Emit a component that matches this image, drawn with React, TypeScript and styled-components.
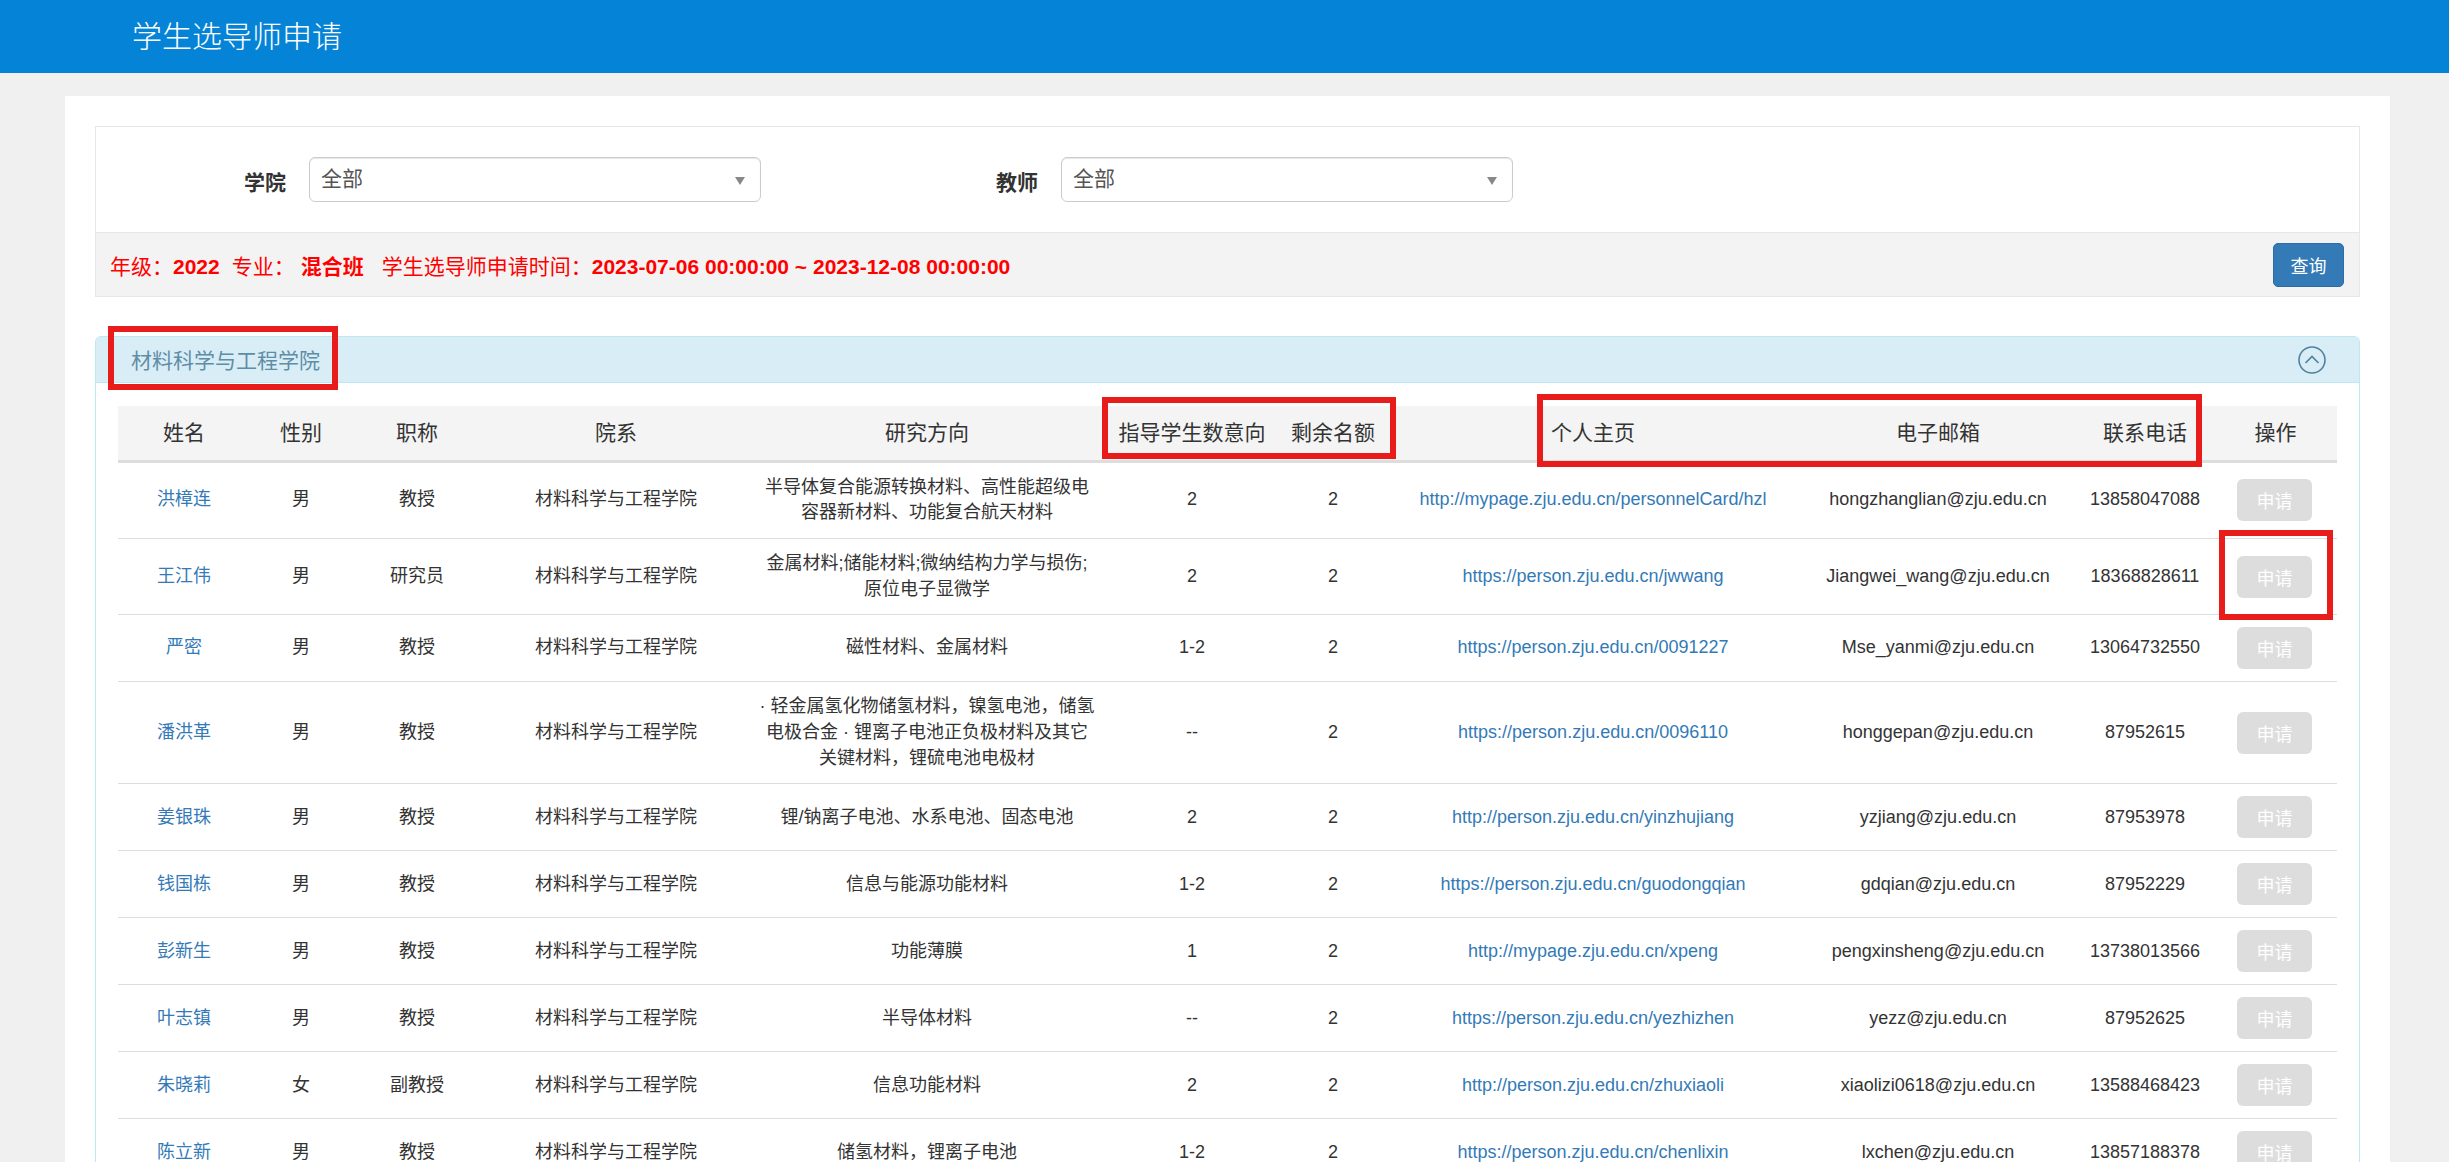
import * as React from "react";
import styled, { createGlobalStyle } from "styled-components";

interface ITeacher {
  name: string;
  gender: string;
  title: string;
  research: string;
  intent: string;
  left: string;
  homepage: string;
  email: string;
  phone: string;
}

const teachers: ITeacher[] = [
  {
    name: "洪樟连",
    gender: "男",
    title: "教授",
    research: "半导体复合能源转换材料、高性能超级电\n容器新材料、功能复合航天材料",
    intent: "2",
    left: "2",
    homepage: "http://mypage.zju.edu.cn/personnelCard/hzl",
    email: "hongzhanglian@zju.edu.cn",
    phone: "13858047088",
  },
  {
    name: "王江伟",
    gender: "男",
    title: "研究员",
    research: "金属材料;储能材料;微纳结构力学与损伤;\n原位电子显微学",
    intent: "2",
    left: "2",
    homepage: "https://person.zju.edu.cn/jwwang",
    email: "Jiangwei_wang@zju.edu.cn",
    phone: "18368828611",
  },
  {
    name: "严密",
    gender: "男",
    title: "教授",
    research: "磁性材料、金属材料",
    intent: "1-2",
    left: "2",
    homepage: "https://person.zju.edu.cn/0091227",
    email: "Mse_yanmi@zju.edu.cn",
    phone: "13064732550",
  },
  {
    name: "潘洪革",
    gender: "男",
    title: "教授",
    research:
      "· 轻金属氢化物储氢材料，镍氢电池，储氢\n电极合金 · 锂离子电池正负极材料及其它\n关键材料，锂硫电池电极材",
    intent: "--",
    left: "2",
    homepage: "https://person.zju.edu.cn/0096110",
    email: "honggepan@zju.edu.cn",
    phone: "87952615",
  },
  {
    name: "姜银珠",
    gender: "男",
    title: "教授",
    research: "锂/钠离子电池、水系电池、固态电池",
    intent: "2",
    left: "2",
    homepage: "http://person.zju.edu.cn/yinzhujiang",
    email: "yzjiang@zju.edu.cn",
    phone: "87953978",
  },
  {
    name: "钱国栋",
    gender: "男",
    title: "教授",
    research: "信息与能源功能材料",
    intent: "1-2",
    left: "2",
    homepage: "https://person.zju.edu.cn/guodongqian",
    email: "gdqian@zju.edu.cn",
    phone: "87952229",
  },
  {
    name: "彭新生",
    gender: "男",
    title: "教授",
    research: "功能薄膜",
    intent: "1",
    left: "2",
    homepage: "http://mypage.zju.edu.cn/xpeng",
    email: "pengxinsheng@zju.edu.cn",
    phone: "13738013566",
  },
  {
    name: "叶志镇",
    gender: "男",
    title: "教授",
    research: "半导体材料",
    intent: "--",
    left: "2",
    homepage: "https://person.zju.edu.cn/yezhizhen",
    email: "yezz@zju.edu.cn",
    phone: "87952625",
  },
  {
    name: "朱晓莉",
    gender: "女",
    title: "副教授",
    research: "信息功能材料",
    intent: "2",
    left: "2",
    homepage: "http://person.zju.edu.cn/zhuxiaoli",
    email: "xiaolizi0618@zju.edu.cn",
    phone: "13588468423",
  },
  {
    name: "陈立新",
    gender: "男",
    title: "教授",
    research: "储氢材料，锂离子电池",
    intent: "1-2",
    left: "2",
    homepage: "https://person.zju.edu.cn/chenlixin",
    email: "lxchen@zju.edu.cn",
    phone: "13857188378",
  },
];

const columns = [
  { label: "姓名", width: 132 },
  { label: "性别", width: 102 },
  { label: "职称", width: 130 },
  { label: "院系", width: 268 },
  { label: "研究方向", width: 354 },
  { label: "指导学生数意向", width: 176 },
  { label: "剩余名额", width: 106 },
  { label: "个人主页", width: 414 },
  { label: "电子邮箱", width: 276 },
  { label: "联系电话", width: 138 },
  { label: "操作", width: 123 },
];

const marks = [
  { x: 108, y: 326, w: 230, h: 64 },
  { x: 1102, y: 397, w: 294, h: 62 },
  { x: 1537, y: 394, w: 665, h: 73 },
  { x: 2219, y: 530, w: 114, h: 90 },
];

export default function App() {
  return (
    <Page>
      <GlobalStyle />
      <TopBar>
        <TopTitle>学生选导师申请</TopTitle>
      </TopBar>
      <Container>
        <FilterPanel>
          <FilterRow>
            <FilterGroup>
              <FilterLabel>学院</FilterLabel>
              <SelectBox>
                全部
                <SelectArrow />
              </SelectBox>
            </FilterGroup>
            <FilterGroup>
              <FilterLabel>教师</FilterLabel>
              <SelectBox>
                全部
                <SelectArrow />
              </SelectBox>
            </FilterGroup>
          </FilterRow>
          <InfoRow>
            <InfoText>
              年级：<b>2022</b>
              <InfoItem $gap={12}>专业：</InfoItem>
              <InfoItem $gap={6}>
                <b>混合班</b>
              </InfoItem>
              <InfoItem $gap={18}>学生选导师申请时间：</InfoItem>
              <b>2023-07-06 00:00:00 ~ 2023-12-08 00:00:00</b>
            </InfoText>
            <SearchButton>查询</SearchButton>
          </InfoRow>
        </FilterPanel>

        <CollegePanel>
          <CollegeHead>
            <CollegeTitle>材料科学与工程学院</CollegeTitle>
            <svg width="28" height="28" viewBox="0 0 28 28" fill="none" stroke="#4f829e">
              <circle cx="14" cy="14" r="13" strokeWidth="1.6" />
              <path d="M7.5 17 L14 10.5 L20.5 17" strokeWidth="1.6" />
            </svg>
          </CollegeHead>
          <CollegeBody>
            <TeacherTable>
              <colgroup>
                {columns.map((c) => (
                  <col key={c.label} width={c.width} />
                ))}
              </colgroup>
              <thead>
                <tr>
                  {columns.map((c) => (
                    <HeadCell key={c.label}>{c.label}</HeadCell>
                  ))}
                </tr>
              </thead>
              <tbody>
                {teachers.map((t) => (
                  <tr key={t.name}>
                    <Cell>
                      <TextLink>{t.name}</TextLink>
                    </Cell>
                    <Cell>{t.gender}</Cell>
                    <Cell>{t.title}</Cell>
                    <Cell>材料科学与工程学院</Cell>
                    <ResearchCell>{t.research}</ResearchCell>
                    <Cell>{t.intent}</Cell>
                    <Cell>{t.left}</Cell>
                    <Cell>
                      <TextLink>{t.homepage}</TextLink>
                    </Cell>
                    <Cell>{t.email}</Cell>
                    <Cell>{t.phone}</Cell>
                    <Cell>
                      <ApplyButton>申请</ApplyButton>
                    </Cell>
                  </tr>
                ))}
              </tbody>
            </TeacherTable>
          </CollegeBody>
        </CollegePanel>
      </Container>
      {/* 빨간 표시 박스 */}
      {marks.map((m) => (
        <RedMark key={m.x} $x={m.x} $y={m.y} $w={m.w} $h={m.h} />
      ))}
    </Page>
  );
}

const GlobalStyle = createGlobalStyle`
  html, body {
    margin: 0;
    padding: 0;
    height: 1162px;
    overflow: hidden;
    background: #f0f0f0;
  }
  * {
    box-sizing: border-box;
  }
  body {
    font-family: "Liberation Sans", "Noto Sans CJK SC", sans-serif;
    color: #333;
  }
`;

const Page = styled.div`
  position: relative;
  width: 2449px;
  height: 1162px;
  overflow: hidden;
`;

const TopBar = styled.header`
  height: 73px;
  background: #0584d7;
  padding-left: 132px;
  display: flex;
  align-items: center;
`;

const TopTitle = styled.h1`
  margin: 0;
  font-size: 30px;
  font-weight: 300;
  line-height: 40px;
  color: #fff;
`;

const Container = styled.main`
  margin: 23px 59px 0 65px;
  padding: 30px 30px 0;
  background: #fff;
`;

const FilterPanel = styled.section`
  border: 1px solid #e7e7e7;
`;

const FilterRow = styled.div`
  height: 105px;
  display: flex;
  align-items: center;
`;

const FilterGroup = styled.div`
  display: grid;
  grid-template-columns: 190px 452px;
  column-gap: 23px;
  align-items: center;
  margin-right: 87px;
`;

const FilterLabel = styled.label`
  font-size: 21px;
  font-weight: 700;
  text-align: right;
  padding-top: 3px;
`;

const SelectBox = styled.div`
  position: relative;
  height: 45px;
  padding: 0 11px 6px;
  display: flex;
  align-items: center;
  font-size: 21px;
  color: #555;
  border: 1px solid #ccc;
  border-radius: 6px;
  box-shadow: inset 0 1px 1px rgba(0, 0, 0, 0.1);
`;

const SelectArrow = styled.i`
  position: absolute;
  right: 15px;
  top: 19px;
  width: 0;
  height: 0;
  border-left: 5px solid transparent;
  border-right: 5px solid transparent;
  border-top: 8px solid #888;
`;

const InfoRow = styled.div`
  height: 64px;
  padding: 0 15px 0 14px;
  display: flex;
  align-items: center;
  justify-content: space-between;
  background: #f3f3f3;
  border-top: 1px solid #e7e7e7;
`;

const InfoText = styled.div`
  font-size: 21px;
  color: #f00;
  white-space: nowrap;
`;

const InfoItem = styled.span<{ $gap: number }>`
  margin-left: ${(props) => props.$gap}px;
`;

const SearchButton = styled.button`
  width: 71px;
  height: 44px;
  padding: 0;
  font-family: inherit;
  font-size: 18px;
  color: #fff;
  background: #337ab7;
  border: 1px solid #2e6da4;
  border-radius: 5px;
`;

const CollegePanel = styled.section`
  margin-top: 39px;
  border: 1px solid #bce8f1;
  border-bottom: 0;
  border-radius: 6px 6px 0 0;
`;

const CollegeHead = styled.div`
  height: 46px;
  padding: 0 33px 0 35px;
  display: flex;
  align-items: center;
  justify-content: space-between;
  background: #d9edf7;
  border-bottom: 1px solid #bce8f1;
  border-radius: 5px 5px 0 0;
`;

const CollegeTitle = styled.h3`
  margin: 0;
  font-size: 21px;
  font-weight: 400;
  color: #5f8da6;
  position: relative;
  top: -1px;
`;

const CollegeBody = styled.div`
  padding: 23px 22px 0;
`;

const TeacherTable = styled.table`
  width: 2219px;
  table-layout: fixed;
  border-collapse: collapse;
`;

const HeadCell = styled.th`
  height: 55px;
  padding: 11px 0;
  font-size: 21px;
  font-weight: 400;
  line-height: 30px;
  text-align: center;
  white-space: nowrap;
  background: #f4f4f4;
  border-bottom: 3px solid #ddd;
`;

const Cell = styled.td`
  padding: 12px 0;
  font-size: 18px;
  line-height: 25.7px;
  text-align: center;
  vertical-align: middle;
  white-space: nowrap;
  border-bottom: 1px solid #ddd;
`;

const ResearchCell = styled(Cell)`
  white-space: pre-line;
`;

const TextLink = styled.a`
  color: #337ab7;
`;

const ApplyButton = styled.button`
  display: block;
  width: 75px;
  height: 42px;
  margin: 0 0 0 23px;
  padding: 0;
  font-family: inherit;
  font-size: 18px;
  color: #fff;
  background: #ddd;
  border: 0;
  border-radius: 6px;
`;

const RedMark = styled.div<{ $x: number; $y: number; $w: number; $h: number }>`
  position: absolute;
  left: ${(props) => props.$x}px;
  top: ${(props) => props.$y}px;
  width: ${(props) => props.$w}px;
  height: ${(props) => props.$h}px;
  border: 6px solid #e91c1c;
  pointer-events: none;
`;
